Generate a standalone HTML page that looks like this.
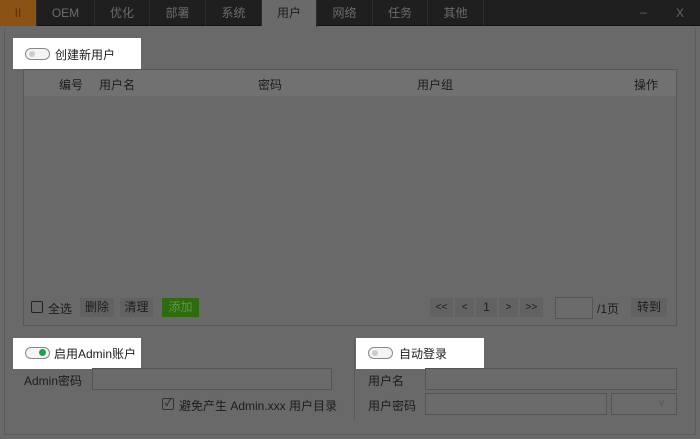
<!DOCTYPE html>
<html style="background:#696969"><head><meta charset="utf-8"><style>
*{margin:0;padding:0;box-sizing:border-box}
html,body{background:#696969}
body{width:700px;height:439px;overflow:hidden;font-family:"Liberation Sans","Noto Sans CJK SC",sans-serif;font-size:12px;color:#1c1c1c;position:relative}
.a{position:absolute}
.bg{left:0;top:0;width:700px;height:439px;background:#696969}
.top{left:0;top:0;width:700px;height:26px;background:#1f1f1f;border-bottom:1px solid #111}
.tab{top:0;height:26px;line-height:26px;text-align:center;color:#6c6c6c;font-size:12px;border-right:1px solid #2c2c2c}
.hl{background:#fff;}
.sw{width:25px;height:12px;border:1px solid #888;border-radius:7px;background:#f4f4f4}
.sw i{position:absolute;top:2px;left:3px;width:6px;height:6px;border-radius:50%;background:#ccc}
.btn{height:19px;line-height:19px;background:#626262;text-align:center;color:#1c1c1c}
.inp{border:1px solid #555;background:#6b6b6b}
</style></head><body>
<div class="a bg"></div>
<div class="a top"></div>
<div class="a tab" style="left:0;width:37px;background:#8a5214;color:#5a3000">II</div>
<div class="a tab" style="left:37px;width:58px">OEM</div>
<div class="a tab" style="left:95px;width:55px">优化</div>
<div class="a tab" style="left:150px;width:56px">部署</div>
<div class="a tab" style="left:206px;width:56px">系统</div>
<div class="a tab" style="left:262px;width:55px;background:#6a6a6a;color:#1c1c1c;height:27px">用户</div>
<div class="a tab" style="left:317px;width:56px">网络</div>
<div class="a tab" style="left:373px;width:55px">任务</div>
<div class="a tab" style="left:428px;width:56px">其他</div>
<div class="a" style="left:640px;top:5px;color:#666">–</div>
<div class="a" style="left:676px;top:6px;color:#666">X</div>

<div class="a" style="left:4px;top:28px;width:692px;height:407px;border:1px solid #5c5c5c;border-top:none"></div>
<div class="a" style="left:23px;top:69px;width:654px;height:257px;border:1px solid #585858"></div>
<div class="a" style="left:24px;top:70px;width:652px;height:26px;background:#717171"></div>
<div class="a" style="left:59px;top:76px">编号</div>
<div class="a" style="left:99px;top:76px">用户名</div>
<div class="a" style="left:258px;top:76px">密码</div>
<div class="a" style="left:417px;top:76px">用户组</div>
<div class="a" style="left:634px;top:76px">操作</div>

<div class="a hl" style="left:13px;top:38px;width:128px;height:31px"></div>
<div class="a sw" style="left:25px;top:48px"><i></i></div>
<div class="a" style="left:55px;top:46px">创建新用户</div>

<div class="a" style="left:31px;top:301px;width:12px;height:12px;border:1px solid #222;border-radius:2px"></div>
<div class="a" style="left:48px;top:300px">全选</div>
<div class="a btn" style="left:80px;top:298px;width:34px">删除</div>
<div class="a btn" style="left:120px;top:298px;width:33px">清理</div>
<div class="a btn" style="left:162px;top:298px;width:37px;background:#2f6a10;color:#5c9a40">添加</div>
<div class="a btn" style="left:430px;top:298px;width:23px;font-size:10px">&lt;&lt;</div>
<div class="a btn" style="left:455px;top:298px;width:19px;font-size:10px">&lt;</div>
<div class="a btn" style="left:476px;top:298px;width:21px">1</div>
<div class="a btn" style="left:499px;top:298px;width:19px;font-size:10px">&gt;</div>
<div class="a btn" style="left:520px;top:298px;width:23px;font-size:10px">&gt;&gt;</div>
<div class="a inp" style="left:555px;top:297px;width:38px;height:22px"></div>
<div class="a" style="left:597px;top:300px">/1页</div>
<div class="a btn" style="left:631px;top:298px;width:36px">转到</div>

<div class="a" style="left:354px;top:340px;width:1px;height:80px;background:#5a5a5a"></div>

<div class="a hl" style="left:13px;top:338px;width:128px;height:31px"></div>
<div class="a sw" style="left:25px;top:347px"><i style="left:13px;background:#1fa050;width:7px;height:7px;top:1px"></i></div>
<div class="a" style="left:54px;top:345px">启用Admin账户</div>
<div class="a" style="left:24px;top:372px">Admin密码</div>
<div class="a inp" style="left:92px;top:368px;width:240px;height:22px"></div>
<div class="a" style="left:162px;top:398px;width:12px;height:12px;border:1px solid #333;border-radius:2px;font-size:10px;line-height:10px;text-align:center">✓</div>
<div class="a" style="left:179px;top:397px">避免产生 Admin.xxx 用户目录</div>

<div class="a hl" style="left:356px;top:338px;width:128px;height:31px"></div>
<div class="a sw" style="left:368px;top:347px"><i></i></div>
<div class="a" style="left:399px;top:345px">自动登录</div>
<div class="a" style="left:368px;top:372px">用户名</div>
<div class="a inp" style="left:425px;top:368px;width:252px;height:22px"></div>
<div class="a" style="left:368px;top:397px">用户密码</div>
<div class="a inp" style="left:425px;top:393px;width:182px;height:22px"></div>
<div class="a inp" style="left:611px;top:393px;width:66px;height:22px;text-align:right;padding-right:12px;color:#555;font-size:10px;line-height:20px">v</div>
</body></html>
